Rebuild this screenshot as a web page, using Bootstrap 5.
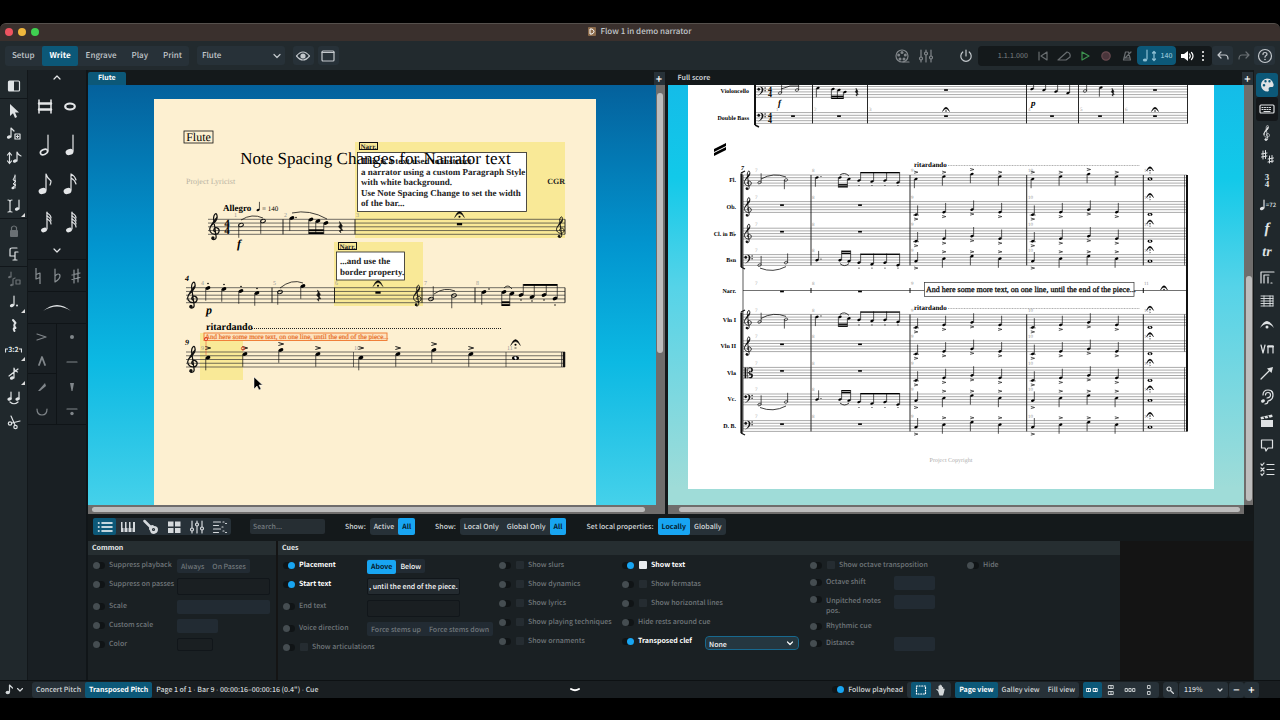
<!DOCTYPE html>
<html lang="en">
<head>
<meta charset="utf-8">
<meta name="viewport" content="width=device-width, initial-scale=1">
<title>Flow 1 in demo narrator</title>
<link href="https://cdn.jsdelivr.net/npm/bootstrap@5.3.0/dist/css/bootstrap.min.css" rel="stylesheet">
<style>
  :root { --teal:#0c5878; --azure:#18a5f2; --btn:#273138; --ink:#c3c8cc; }
  body { background:#000; color:var(--ink); font-family:"Noto Sans CJK SC",sans-serif; font-size:7px; line-height:16px; font-weight:500; text-rendering:geometricPrecision; }
  button, input, select { font:inherit; color:inherit; line-height:inherit; text-rendering:inherit; }
  button { background:none; border:0; padding:0; display:inline-flex; align-items:center; justify-content:center; white-space:nowrap; }
  svg { display:block; flex:none; }
  .ico { fill:none; stroke:currentColor; stroke-width:1.2; stroke-linecap:round; stroke-linejoin:round; }
  .ico:where(:not([width])) { width:16px; height:16px; }
  .ico .f, .f { fill:currentColor; stroke:none; }
  .app { min-height:100vh; padding:23px 0 22px; }
  .titlebar { height:18px; background:#3a302d; border-top:1px solid #55504c; border-radius:6px 6px 0 0; font-size:8px; padding-bottom:2px; }
  .lights { left:5px; top:4px; gap:5px; }
  .lights i { width:8px; height:8px; border-radius:50%; }
  .topbar { height:29px; background:#222a2e; font-size:8px; padding:0 5px; }
  .seg { background:var(--btn); border-radius:3px; }
  .seg button { border-radius:2px; }
  .on { background:var(--teal); color:#fff; }
  .hot { background:var(--azure); color:#06202f; font-weight:700; }
  .modes { gap:1px; }
  .modes button { height:20px; padding:0 7px; }
  .pick { appearance:none; border:0; outline:0; background:transparent; width:100%; height:100%; padding:0 5px; }
  .pickbox { background:var(--btn); border-radius:3px; }
  .pickbox svg { position:absolute; right:4px; top:calc(50% - 4px); width:8px; height:8px; pointer-events:none; }
  .sq { width:21px; height:19px; background:var(--btn); border-radius:3px; }
  .transport { width:234px; height:20px; padding-right:3px; background:#14191b; border-radius:4px; color:#686d70; }
  .transport button { width:21px; }
  .edge { background:#20282c; }
  .tools { width:28px; border-right:1px solid #12171a; padding-top:4px; }
  .tools button { width:27px; height:24px; position:relative; color:#dfe3e5; }
  .tools .rule { border-top:1px solid #11161a; }
  .tools .more::after { content:""; position:absolute; right:2px; bottom:1px; border:2px solid; border-color:transparent #ddd #ddd transparent; }
  .dimmed { color:#6a7074 !important; }
  .palette { width:60px; background:#191f23; border-right:2px solid #101518; color:#e4e6e8; }
  .palette section { border-bottom:1px solid #0f1417; }
  .notes { display:grid; grid-template-columns:1fr 1fr; padding:0 4px; }
  .notes button { height:39px; }
  .arts { display:grid; grid-template-columns:1fr 1fr; color:#80868a; }
  .arts button { height:25px; }
  .arts button:nth-child(odd) { border-right:1px solid #0f1417; }
  .arts .cut { border-bottom:1px solid #0f1417; }
  .right { width:27px; border-left:1px solid #141819; padding-top:3px; }
  .right button { width:26px; height:24px; color:#dfe2e4; }
  .right .on, .right .blk { width:22px; margin:0 2px; border-radius:3px; }
  .right .blk { background:#14171a; }
  .tabs { height:15px; background:#14191b; }
  .tabs .tab { height:13px; padding:0 10px; border-radius:2px 2px 0 0; font-weight:700; line-height:13px; }
  .tabs .plus { width:11px; height:13px; background:var(--btn); font-size:11px; }
  .panes { background:#14181a; gap:3px; }
  .paneA { flex:577 1 0; } .paneB { flex:586 1 0; }
  .canvas { min-height:0; overflow:hidden; }
  .skyA { background:linear-gradient(#04619c, #0295cf 38%, #0cb9e3 66%, #45d1ea); }
  .skyB { background:linear-gradient(#14bce8, #12c9e9 22%, #55d3e8 48%, #9fdcd8 96%); }
  .sheetA { margin:14px 0 0 66px; color:#111; } .sheetB { margin:0 0 0 20px; color:#111; }
  .vbar { width:9px; background:#6f6d6c; } .hbar { height:9px; background:#6f6d6c; }
  .thumb { background:#bdbdbd; border-radius:4px; }
  .propbar { height:27px; background:#14191b; color:#d5d9dc; padding:0 0 2px 5px; }
  .propbar .seg button { height:17px; padding:0 4px; }
  .propbar .modesel button { width:23px; }
  .search { width:75px; height:15px; margin-left:19px; background:#262e33; border:0; border-radius:2px; padding:0 3px; }
  .search::placeholder { color:#747b80; }
  .cap { margin:0 4px 0 20px; }
  .props { background:#141414; flex:1; gap:2px; }
  .box { background:#1a2023; }
  .boxhead { height:14px; background:#262e31; color:#e8eaeb; line-height:14px; padding:0 4px; font-weight:700; }
  .boxbody { padding:2px 5px 16px; color:#71777b; }
  .wA { width:188px; } .wB { width:842px; }
  .k1 { width:216px } .k2 { width:123px } .k3 { width:188px } .k4 { width:157px }
  .prop { display:flex; align-items:flex-start; position:relative; white-space:nowrap; }
  .prop > label { display:flex; align-items:center; gap:4px; flex:none; }
  .live > label { color:#fff; font-weight:700; }
  .r17 { min-height:17px } .r19 { min-height:19px } .r22 { min-height:22px } .r25 { min-height:25px }
  .sw { appearance:none; width:12px; height:7px; margin:0; border-radius:4px; background:#101416; position:relative; flex:none; }
  .sw::before { content:""; position:absolute; left:0; top:0; width:7px; height:7px; border-radius:50%; background:#454d51; }
  .sw:checked::before { left:auto; right:0; background:var(--azure); }
  .ck { appearance:none; width:8px; height:8px; margin:0 0 0 1px; background:#252c31; border-radius:1px; }
  .ck:checked { background:#e9ecef; }
  .ctl { flex:none; margin-top:2px; height:14px; border:0; border-radius:2px; background:#222b33; padding:0 3px; }
  .ctl.hollow { background:#1a1f22; border:1px solid #11161a; height:17px; }
  .ctl.group { padding:0; }
  .cA { width:84px; }
  .two { width:76px; line-height:10px; padding-top:3px; white-space:normal; }
  .w36 { width:36px } .w41 { width:41px } .w91 { width:93px }
  .ctl button { height:14px; padding:0 4px; border-radius:2px; }
  .statusbar { height:18px; background:#191e21; border-top:1px solid #0d1113; color:#d3d7d9; }
  .statusbar button { height:16px; }
  .statusbar .b { padding:0 4px; }
  .statusbar b.sep { font:400 7px "Liberation Sans",sans-serif; }
  .tiny { width:12px; height:12px; }
  .serif { font-family:"Liberation Serif",serif; font-weight:400; text-rendering:geometricPrecision; }
  .serif .sturdy { font-weight:700; fill:#222; }
</style>
</head>
<body>
<div class="app d-flex flex-column">
  <header class="titlebar position-relative d-flex align-items-center justify-content-center gap-1">
    <div class="lights position-absolute d-flex"><i style="background:#ee5460"></i><i style="background:#f0b73d"></i><i style="background:#3fd051"></i></div>
    <svg width="8" height="9"><rect width="8" height="9" rx="1" fill="#8b6a4a"/><path d="M2 2v5h2q2-1 2-2.500t-2-2.500z" fill="none" stroke="#fff"/></svg>
    <span>Flow 1 in demo narrator</span>
  </header>

  <nav class="topbar d-flex align-items-center">
    <div class="seg modes d-flex"><button>Setup</button><button class="on fw-bold">Write</button><button>Engrave</button><button>Play</button><button>Print</button></div>
    <div class="pickbox position-relative ms-2" style="width:88px;height:19px"><select class="pick" aria-label="Layout"><option>Flute</option></select><svg viewBox="0 0 8 8" class="ico"><path d="M1 2.500 4 5.500 7 2.500"/></svg></div>
    <button class="sq ms-2" aria-label="View"><svg class="ico" viewBox="0 0 16 16"><path d="M1.500 8Q8 0 14.500 8 8 16 1.500 8z"/><circle cx="8" cy="8" r="2.600" class="f"/></svg></button>
    <button class="sq ms-1" aria-label="Window"><svg class="ico" viewBox="0 0 16 16"><rect x="2" y="3" width="12" height="10" rx="1"/><path d="M2 4.500h12"/></svg></button>
    <div class="ms-auto d-flex align-items-center">
      <button class="me-2" style="color:#81868a" aria-label="Video"><svg class="ico" viewBox="0 0 16 16"><circle cx="8" cy="8" r="6"/><g class="f"><circle cx="8" cy="4.500" r="1.500"/><circle cx="4.700" cy="7" r="1.500"/><circle cx="11.300" cy="7" r="1.500"/><circle cx="6" cy="11" r="1.500"/><circle cx="10" cy="11" r="1.500"/></g><path d="M9 14h6"/></svg></button>
      <button class="me-4" style="color:#81868a" aria-label="Mixer"><svg class="ico" viewBox="0 0 16 16"><path d="M3 2v7M3 12v2M8 2v2M8 7v7M13 2v6M13 11v3"/><circle cx="3" cy="10.500" r="1.500"/><circle cx="8" cy="5.500" r="1.500"/><circle cx="13" cy="9.500" r="1.500"/></svg></button>
      <button class="me-1" aria-label="Power"><svg class="ico" viewBox="0 0 16 16" stroke-width="1.500"><path d="M4.800 4A5.200 5.200 0 1 0 11.200 4M8 2v6"/></svg></button>
      <div class="transport d-flex align-items-center justify-content-end">
        <span class="me-1" style="font-size:7px">1.1.1.000</span>
        <button aria-label="Rewind"><svg class="ico" viewBox="0 0 16 16"><path d="M4 4v8M12 4v8L6 8z"/></svg></button>
        <button aria-label="Slow"><svg class="ico" viewBox="0 0 16 16"><path d="M2 12 11 4q4 1 3 5l-4 3z"/></svg></button>
        <button style="color:#3e9350" aria-label="Play"><svg class="ico" viewBox="0 0 16 16"><path d="M5 4v8l7-4z"/></svg></button>
        <button aria-label="Record"><svg class="ico" viewBox="0 0 16 16"><circle cx="8" cy="8" r="4.200" fill="#4a353b" stroke="#67494f"/></svg></button>
        <button aria-label="Click"><svg class="ico" viewBox="0 0 16 16"><path d="M6.500 4h3l2 8h-7zM6 10l6-6M5.500 10h5"/></svg></button>
        <button class="on rounded-1" style="width:39px;height:19px;color:#8ec0d4;font-size:7px" aria-label="Tempo"><svg class="ico" viewBox="0 0 16 16"><path d="M6 2v9M13 4v8M11.500 5 13 3.500 14.500 5M11.500 11 13 12.500 14.500 11"/><ellipse cx="4" cy="12" rx="2.200" ry="1.600" class="f"/></svg><span class="ms-1">140</span></button>
        <button class="text-white" aria-label="Volume"><svg class="ico" viewBox="0 0 16 16"><path class="f" d="M2 6h3l4-3v10l-4-3H2z"/><path d="M10.500 6q1.500 2 0 4M12.500 4.500q3 3.500 0 7"/></svg></button>
        <button class="text-white" style="width:12px" aria-label="More"><svg width="4" height="12" class="f" viewBox="0 0 4 12"><circle cx="2" cy="2" r="1"/><circle cx="2" cy="6" r="1"/><circle cx="2" cy="10" r="1"/></svg></button>
      </div>
      <button class="sq" aria-label="Undo"><svg class="ico" viewBox="0 0 16 16"><path d="M6 4 3 7l3 3M3 7h7q3 0 3 4"/></svg></button>
      <button class="sq bg-transparent" style="color:#6a7074" aria-label="Redo"><svg class="ico" viewBox="0 0 16 16"><path d="m10 4 3 3-3 3M13 7H6q-3 0-3 4"/></svg></button>
      <button class="sq" aria-label="Help"><svg class="ico" viewBox="0 0 16 16"><circle cx="8" cy="8" r="6.500"/><path d="M6 6.500q0-2 2-2t2 1.700q0 1-1.200 1.600-.8.500-.8 1.400" /><circle cx="8" cy="11.500" r=".8" class="f"/></svg></button>
    </div>
  </nav>

  <div class="d-flex flex-grow-1">
    <aside class="tools edge d-flex flex-column" id="tools"></aside>
    <aside class="palette d-flex flex-column">
      <section>
        <button class="w-100" style="height:15px" aria-label="Shorter"><svg width="8" height="5" class="ico"><path d="M1 4 4 1 7 4"/></svg></button>
        <div class="notes" id="durations"></div>
        <button class="w-100" style="height:17px" aria-label="Longer"><svg width="8" height="5" class="ico"><path d="M1 1 4 4 7 1"/></svg></button>
      </section>
      <section class="d-flex justify-content-around align-items-center" style="height:32px;color:#8b9195">
        <button aria-label="Natural"><svg class="ico" viewBox="0 0 16 16"><path d="M6 0v11l4-1.500M10 16V5L6 6.500"/></svg></button>
        <button aria-label="Flat"><svg class="ico" viewBox="0 0 16 16"><path d="M6 1v13q5-3 5-6 0-2-2-2-1 0-3 2"/></svg></button>
        <button aria-label="Sharp"><svg class="ico" viewBox="0 0 16 16"><path d="M6 2v13M10 1v13M4 7l8-2M4 11.500l8-2"/></svg></button>
      </section>
      <section><button class="w-100" style="height:31px" aria-label="Slur"><svg width="30" height="8" class="f"><path d="M1 7Q15-5 29 7 15-2 1 7z"/></svg></button></section>
      <section class="arts" id="arts"></section>
    </aside>

    <main class="flex-grow-1 d-flex flex-column" style="min-width:0">
      <div class="panes d-flex">
        <section class="paneA d-flex flex-column" style="min-width:0">
          <div class="tabs d-flex align-items-end"><span class="tab on">Flute</span><button class="plus ms-auto text-white">+</button></div>
          <div class="d-flex">
            <div class="canvas skyA flex-grow-1"><svg class="sheetA serif" id="part" width="442" height="406" viewBox="154 99 442 406" style="background:#fdf0d1"></svg></div>
            <div class="vbar pt-2"><div class="thumb mx-auto" style="width:6px;height:63%"></div></div>
          </div>
          <div class="hbar d-flex align-items-center"><div class="thumb ms-1" style="width:96%;height:5px"></div></div>
        </section>
        <section class="paneB d-flex flex-column" style="min-width:0">
          <div class="tabs d-flex align-items-end"><span class="tab">Full score</span><button class="plus ms-auto text-white">+</button></div>
          <div class="d-flex">
            <div class="canvas skyB flex-grow-1" style="height:420px"><svg class="sheetB serif" id="full" width="526" height="404" viewBox="688 85 526 404" style="background:#fff"></svg></div>
            <div class="vbar d-flex flex-column justify-content-end pb-1"><div class="thumb mx-auto" style="width:6px;height:54%"></div></div>
          </div>
          <div class="hbar d-flex align-items-center justify-content-end pe-1" style="margin-right:9px"><div class="thumb" style="width:98%;height:5px"></div></div>
        </section>
      </div>

      <div class="propbar d-flex align-items-center">
        <div class="seg modesel d-flex" id="lower"></div>
        <input class="search" placeholder="Search..." aria-label="Search">
        <span class="cap">Show:</span><div class="seg d-flex"><button>Active</button><button class="hot">All</button></div>
        <span class="cap">Show:</span><div class="seg d-flex"><button>Local Only</button><button>Global Only</button><button class="hot">All</button></div>
        <span class="cap">Set local properties:</span><div class="seg d-flex"><button class="hot">Locally</button><button>Globally</button></div>
      </div>

      <div class="props d-flex">
        <section class="box wA">
          <div class="boxhead">Common</div>
          <div class="boxbody">
            <div class="prop r19"><label class="cA"><input type="checkbox" class="sw">Suppress playback</label><div class="ctl group"><button>Always</button><button>On Passes</button></div></div>
            <div class="prop r22"><label class="cA"><input type="checkbox" class="sw">Suppress on passes</label><input class="ctl hollow w91" aria-label="Passes"></div>
            <div class="prop r19"><label class="cA"><input type="checkbox" class="sw">Scale</label><input class="ctl w91" aria-label="Scale value"></div>
            <div class="prop r19"><label class="cA"><input type="checkbox" class="sw">Custom scale</label><input class="ctl w41" aria-label="Custom scale value"></div>
            <div class="prop r19"><label class="cA"><input type="checkbox" class="sw">Color</label><input class="ctl hollow w36" style="height:13px" aria-label="Color value"></div>
          </div>
        </section>
        <section class="box wB">
          <div class="boxhead">Cues</div>
          <div class="boxbody d-flex">
            <div class="k1">
              <div class="prop r19 live"><label class="cA"><input type="checkbox" class="sw" checked>Placement</label><div class="ctl group"><button class="hot">Above</button><button class="text-light">Below</button></div></div>
              <div class="prop r22 live"><label class="cA"><input type="checkbox" class="sw" checked>Start text</label><input class="ctl hollow text-light w91" style="background:#242b30;padding:0 1px" value=", until the end of the piece..." aria-label="Start text value"></div>
              <div class="prop r22"><label class="cA"><input type="checkbox" class="sw">End text</label><input class="ctl hollow w91" aria-label="End text value"></div>
              <div class="prop r19"><label class="cA"><input type="checkbox" class="sw">Voice direction</label><div class="ctl group"><button>Force stems up</button><button>Force stems down</button></div></div>
              <div class="prop r19"><label><input type="checkbox" class="sw"><input type="checkbox" class="ck" aria-label="Show articulations">Show articulations</label></div>
            </div>
            <div class="k2">
              <div class="prop r19"><label><input type="checkbox" class="sw"><input type="checkbox" class="ck">Show slurs</label></div>
              <div class="prop r19"><label><input type="checkbox" class="sw"><input type="checkbox" class="ck">Show dynamics</label></div>
              <div class="prop r19"><label><input type="checkbox" class="sw"><input type="checkbox" class="ck">Show lyrics</label></div>
              <div class="prop r19"><label><input type="checkbox" class="sw"><input type="checkbox" class="ck">Show playing techniques</label></div>
              <div class="prop r19"><label><input type="checkbox" class="sw"><input type="checkbox" class="ck">Show ornaments</label></div>
            </div>
            <div class="k3">
              <div class="prop r19 live"><label><input type="checkbox" class="sw" checked><input type="checkbox" class="ck" checked>Show text</label></div>
              <div class="prop r19"><label><input type="checkbox" class="sw"><input type="checkbox" class="ck">Show fermatas</label></div>
              <div class="prop r19"><label><input type="checkbox" class="sw"><input type="checkbox" class="ck">Show horizontal lines</label></div>
              <div class="prop r19"><label><input type="checkbox" class="sw">Hide rests around cue</label></div>
              <div class="prop r19 live"><label class="cA"><input type="checkbox" class="sw" checked>Transposed clef</label><div class="pickbox position-relative text-light" style="width:92px;height:12px;margin-top:4px;background:#253740;outline:1px solid #18698f"><select class="pick" style="padding:0 3px;line-height:10px" aria-label="Transposed clef value"><option>None</option></select><svg viewBox="0 0 8 8" class="ico"><path d="M1.500 3 4 5.500 6.500 3"/></svg></div></div>
            </div>
            <div class="k4">
              <div class="prop r17"><label><input type="checkbox" class="sw"><input type="checkbox" class="ck">Show octave transposition</label></div>
              <div class="prop r19"><label class="cA"><input type="checkbox" class="sw">Octave shift</label><input class="ctl w41" aria-label="Octaves"></div>
              <div class="prop r25"><label class="two align-items-start me-2"><input type="checkbox" class="sw">Unpitched notes pos.</label><input class="ctl w41" aria-label="Position"></div>
              <div class="prop r17"><label><input type="checkbox" class="sw">Rhythmic cue</label></div>
              <div class="prop r19"><label class="cA"><input type="checkbox" class="sw">Distance</label><input class="ctl w41" aria-label="Distance value"></div>
            </div>
            <div class="prop"><label><input type="checkbox" class="sw">Hide</label></div>
          </div>
        </section>
      </div>
    </main>
    <aside class="right edge d-flex flex-column" id="right"></aside>
  </div>

  <footer class="statusbar d-flex align-items-center justify-content-between">
    <div class="d-flex">
      <button style="width:28px" class="gap-1" aria-label="Input"><svg width="8" height="11" viewBox="0 0 8 11" class="ico"><path d="M4.500 8V1l3 3"/><ellipse cx="2.800" cy="8.500" rx="2.200" ry="1.800" class="f"/></svg><svg width="6" height="4" class="ico"><path d="M.5.500 3 3 5.500.5"/></svg></button>
      <div class="seg d-flex ms-1"><button class="b">Concert Pitch</button><button class="b on fw-bold">Transposed Pitch</button></div>
      <span class="ms-1">Page 1 of 1 <b class="sep">·</b> Bar 9 <b class="sep">·</b> 00:00:16–00:00:16 (0.4") <b class="sep">·</b> Cue</span>
    </div>
    <button class="text-white" aria-label="Toggle lower zone"><svg width="12" height="6" class="ico" style="stroke-width:2"><path d="M2 2q4 2.500 8 0"/></svg></button>
    <div class="d-flex" style="padding-right:21px">
      <label class="d-flex align-items-center gap-1"><input type="checkbox" class="sw" checked>Follow playhead</label>
      <div class="seg d-flex mx-1"><button class="on ms-1" style="width:20px" aria-label="Marquee"><svg class="tiny ico" viewBox="0 0 12 12"><rect x="1.500" y="2" width="9" height="8" stroke-dasharray="1 1.600"/></svg></button><button style="width:20px" aria-label="Hand"><svg class="tiny f" viewBox="0 0 12 12"><path d="M3 7 1 5.500 2 5l1.500 1V2q.7-.8 1.100 0V1q.7-.9 1.200 0v.500q.9-.6 1.200.3V3q1-.6 1.200.3V5q.8-.8 1.500 0L8.800 9 8 11.500H4.500z"/></svg></button></div>
      <div class="seg d-flex me-1"><button class="b on fw-bold">Page view</button><button class="b">Galley view</button><button class="b">Fill view</button></div>
      <div class="seg d-flex" id="arr"></div>
      <div class="d-flex ms-1">
        <button class="seg" style="width:15px" aria-label="Zoom"><svg class="ico" width="8" height="8" viewBox="0 0 8 8"><circle cx="3" cy="3" r="2"/><path d="m5 5 2.500 2.500"/></svg></button>
        <div class="pickbox position-relative" style="width:49px;height:16px;margin:0 1px"><select class="pick" aria-label="Zoom level"><option>119%</option></select><svg viewBox="0 0 8 8" class="ico"><path d="M2 3l2 2 2-2"/></svg></div>
        <button class="seg text-white" style="width:15px;font-size:11px">−</button><button class="seg text-white" style="width:15px;font-size:11px">+</button>
      </div>
    </div>
  </footer>
</div>

<script src="https://cdn.jsdelivr.net/npm/bootstrap@5.3.0/dist/js/bootstrap.bundle.min.js"></script>
<script>
/* ---------- engraving helpers: y values are page coordinates, s is one staff space ---------- */
const L = (x1,y1,x2,y2,w=.6,c='#111') => `<path d="M${x1} ${y1}L${x2} ${y2}" stroke="${c}" stroke-width="${w}" fill="none"/>`;
const T = (x,y,size,str,extra='') => `<text x="${x}" y="${y}" font-size="${size}" ${extra}>${str}</text>`;
const staff = (x1,x2,y,s) => [0,1,2,3,4].map(i => L(x1,y+i*s,x2,y+i*s,s>3?.7:.5,s>3?'#333':'#555')).join('');
const meter = (x,y,s,z) => T(x,y+s*2,z,`4<tspan x="${x}" dy="${s*2}">4</tspan>`,'font-weight="700" text-anchor="middle"');
const place = (x,y,k,body) => `<g transform="translate(${x} ${y}) scale(${k})">${body}</g>`;
const TREBLE = '<path d="M6 13.600C3.600 11 6 8.300 8.700 9.200 12.600 11 10.600 16.300 6.500 16 1.500 15.800-.5 11.500 1.500 8 3.500 4.500 9 2.300 8.700-2.500 8.600-4.500 8-6 7.300-6 5.300-5.500 4.600-2 5 .5L7.600 18.500C8 22 4 22.600 3 20.300" fill="none" stroke="currentColor" stroke-width="1.300"/><path d="M1.500 8C3.500 5 7.500 3 8.500-1L8.700-3 6.800-1 2.800 4.500Q.5 8 1 11z" fill="currentColor"/><circle cx="4.200" cy="20" r="1.800" fill="currentColor"/>';
const BASS = '<path d="M1 4.500C1-1 9.500-1.500 9.500 4.500 9.500 9 5 12 .5 14 5 11 7 8 7 4.500 7 .5 3.500-.5 2.200 2.500z" fill="currentColor"/><circle cx="2.600" cy="4.200" r="2" fill="currentColor"/><circle cx="12" cy="2.200" r="1.100" fill="currentColor"/><circle cx="12" cy="6.200" r="1.100" fill="currentColor"/>';
const ALTO = '<path d="M0 0h2.600v16H0zM3.600 0h1v16h-1zM4.600 8Q7 7 7 5q3 3 3-1.500Q10 1 7 1.500L6 3Q5-.3 8-.3q4.500.3 4.500 4T8 7.300L7 8l1 .7q4.500-.2 4.500 3.500t-4.500 4Q5 16.300 6 13l1 1.500q3 .5 3-2T7 11Q7 9 4.600 8z" fill="currentColor"/>';
const REST = '<path d="M2 0 5 4.500Q3 7 5.500 9.500q-3.500-.5-2 2.500Q0 9.500 4 9L1 5.500Q3.500 3.500 2 0z" fill="currentColor" stroke="currentColor" stroke-width=".6"/>';
const clef = (x,y,s,kind=TREBLE,m=1) => place(x,y+(m<1?2:0),s/4*m,kind);
const rest = (x,y,s) => place(x-s*.9,y+s*.6,s/4,REST);
const whole = (x,y,s) => `<rect x="${x-s*.7}" y="${y+s}" width="${s*1.4}" height="${s*.6}"/>`;
const slur = (x1,y1,x2,y2,h) => `<path d="M${x1} ${y1}Q${(x1+x2)/2} ${(y1+y2)/2-h} ${x2} ${y2}" fill="none" stroke="#111" stroke-width=".8"/>`;
const dot = (x,y,s) => `<circle cx="${x}" cy="${y}" r="${s*.2}"/>`;
const head = (x,y,s,open) => `<ellipse cx="${x}" cy="${y}" rx="${s*.66}" ry="${s*.44}" transform="rotate(-22 ${x} ${y})" ${open?`fill="none" stroke="#111" stroke-width="${s*.24}"`:''}/>`;
const note = (x,y,s,dir,open,len=3.4) => head(x,y,s,open)+L(x-dir*s*.6,y,x-dir*s*.6,y+dir*s*len,.7);
const accent = (x,y,s) => `<path d="M${x-s*.7} ${y-s*.4}L${x+s*.7} ${y}L${x-s*.7} ${y+s*.4}" fill="none" stroke="#111" stroke-width="${s*.25}"/>`;
const fermata = (x,y,s) => `<path d="M${x-s*1.3} ${y}Q${x} ${y-s*3.200} ${x+s*1.3} ${y}Q${x} ${y-s*2.100} ${x-s*1.3} ${y}z" stroke="#111" stroke-width=".5"/>`+dot(x,y-s*.2,s*1.4);
const semibreve = (x,y,s) => `<ellipse cx="${x}" cy="${y}" rx="${s*.95}" ry="${s*.55}"/><ellipse cx="${x}" cy="${y}" rx="${s*.3}" ry="${s*.42}" fill="#fff" transform="rotate(-25 ${x} ${y})"/>`;
const beam = (x1,x2,y,s) => `<rect x="${x1}" y="${y}" width="${x2-x1}" height="${s*.5}"/>`;
const num = (x,y,n,z=6) => T(x,y,z,n,'fill="#999"');
/* beamed run: notes [[x,y]...] sharing one beam line */
const run = (ns,s,dir,by,n=1) => ns.map(([x,y])=>head(x,y,s)+L(x-dir*s*.6,y,x-dir*s*.6,by,.7)).join('')
  + Array.from({length:n},(_,i)=>beam(ns[0][0]-dir*s*.6,ns[ns.length-1][0]-dir*s*.6,(dir>0?by-s*.5:by)-dir*i*s*.75,s)).join('');

/* ---------- flute part ---------- */
(() => {
  const s=3.75; let o='';
  const Y='#f9e997';
  o+=`<rect x="355" y="142" width="210" height="96" fill="${Y}"/><rect x="334" y="242" width="89" height="64" fill="${Y}"/><rect x="200" y="333" width="43" height="47" fill="${Y}"/>`;
  o+=`<rect x="184" y="131" width="29" height="12" fill="none" stroke="#111" stroke-width=".8"/>`+T(198.5,141,12,'Flute','text-anchor="middle"');
  o+=T(186,184,8,'Project Lyricist','fill="#b9b3a3"')+T(565,184,8,'CGR','text-anchor="end" class="sturdy"');
  o+=`<rect x="357.500" y="152.500" width="169" height="59" fill="#fff" stroke="#222" stroke-width=".8"/>`;
  ['This is a text used to instruct','a narrator using a custom Paragraph Style','with white background.','Use Note Spacing Change to set the width','of the bar...'].forEach((t,i)=>o+=T(361,164+i*10.5,9,t,'class="sturdy"'));
  o+=T(375.5,164,17,'Note Spacing Changes for Narrator text','text-anchor="middle"');
  o+=`<rect x="359.500" y="142.500" width="18" height="7" fill="${Y}" stroke="#111"/>`+T(368.5,148.5,7,'Narr.','text-anchor="middle" class="sturdy"');
  /* first system */
  let y=219.3;
  o+=staff(208,565,y,s)+clef(209,y,s)+meter(227,y,s,11);
  [283,355,565].forEach(x=>o+=L(x,y,x,y+15,.9));
  o+=T(223,211,9,'Allegro','font-weight="700"')+note(258,210,2.4,-1)+T(262,211,7,'= 140');
  o+=num(234,217,1)+num(284,217,2)+num(356,217,3);
  o+=note(241,225,s,1,1)+note(263,221,s,1,1)+slur(241,220,263,218,6)+note(292,218,s,1)+dot(296,217.5,s)+run([[311,219.5],[318,221],[326,223]],s,1,234,2)+slur(292,213,327,219,7)+rest(341,y,s);
  o+=fermata(459.500,217.500,s)+whole(459.500,y,s)+clef(556,y,s,TREBLE,.8)+T(237,248,12,'f','font-weight="700" font-style="italic"');
  /* second system */
  y=287.7;
  o+=staff(186,565,y,s)+clef(187,y,s); [272,334.5,422,475,565].forEach(x=>o+=L(x,y,x,y+15,.9));
  [[208,288],[224,289],[241,291],[257,293]].forEach(([a,b])=>o+=note(a,b,s,1)+dot(a,b-4.5,s*1.1));
  o+=T(185,281,8,'4','font-style="italic" font-weight="700"')+num(201,285,4)+num(273,285,5)+num(335,285,6)+num(424,285,7)+num(476,285,8);
  o+=note(280,292,s,1,1)+note(303,286,s,1)+slur(280,288,303,283,7)+rest(319,y,s)+fermata(378,286.500,s)+whole(378,y,s)+clef(413,y,s,TREBLE,.8);
  o+=note(431,299,s,-1,1)+note(454,295.5,s,1,1)+slur(434,294,455,291,6)+note(484,292,s,1)+dot(489,289,s)+run([[504,292],[512,293.5]],s,1,306,2)+slur(504,288,512,289,5);
  o+=run([[521,295],[532,297],[544,295],[555,298.5]],s,-1,284)+[[521,300],[532,301],[544,300],[555,305]].map(([a,b])=>dot(a,b,s)).join('');
  o+=T(206,314,12,'p','font-weight="700" font-style="italic"');
  o+=`<rect x="338.500" y="242.500" width="18" height="7" fill="${Y}" stroke="#111"/>`+T(347.5,248.5,7,'Narr.','text-anchor="middle" class="sturdy"');
  o+=`<rect x="336.500" y="252" width="68" height="28" fill="#fff" stroke="#222" stroke-width=".8"/>`+T(340,264,9,'...and use the','class="sturdy"')+T(340,274.5,9,'border property.','class="sturdy"');
  /* third system */
  y=352;
  o+=T(206,329.5,10,'ritardando','font-weight="700"')+`<path d="M252 328.500H502" stroke="#222" stroke-dasharray="1 1" fill="none"/>`;
  o+=`<rect x="204" y="333" width="183" height="7.500" fill="#fde2bd" stroke="#f0803a"/>`+T(205,339,7,'And here some more text, on one line, until the end of the piece...','fill="#e8702a" stroke="#e8702a" stroke-width=".2"');
  o+=staff(186,565,y,s)+clef(187,y,s)+L(353.500,y,353.500,y+15)+L(506,y,506,y+15)+L(561.500,y,561.500,y+15)+L(564,y,564,y+15,2.5);
  [208,245,281,318,361,398,434,471].forEach((x,i)=>{const d=[5.6,2,-2,2][i%4];o+=note(x,y+d,s,1)+accent(x,i%4==2?344:348,s)});
  o+=T(185,345,8,'9','font-style="italic" font-weight="700"')+num(201,350,9)+num(354,350,10)+num(507,350,11);
  o+=semibreve(515.5,358,s)+fermata(515.5,345.500,s)+accent(515.5,348,1.5);
  o+=`<g fill="none" stroke="#e0402a"><circle cx="206" cy="339" r="1.600"/><circle cx="243" cy="348.500" r="1.600"/><path d="M206 341v14" stroke-width=".5"/></g>`;
  o+=`<path d="M254 377v12l3-3 2 4 2-1-2-4h3.500z" stroke="#fff" stroke-width=".5"/>`;
  document.getElementById('part').innerHTML=o;
})();

/* ---------- full score ---------- */
(() => {
  const s=2.7, H=s*4; let o='';
  const name=(y,t)=>T(736,y+H/2+2,6,t,'text-anchor="end" font-weight="700"');
  const bars=(xs,a,b)=>xs.map(x=>L(x,a,x,b,.9)).join('');
  /* end of the first system */
  [86.500,112.600].forEach(y=>o+=staff(755,1188,y,s)+clef(757,y,s,BASS)+meter(770,y,s,8));
  o+=bars([812.5,867.5,1026.5,1078.5,1123.5,1187.5],85,123.400)+L(755,85,755,125,2)+L(755,125,759,127,1.5);
  o+=T(749,93,6,'Violoncello','text-anchor="end" font-weight="700"')+T(749,119.5,6,'Double Bass','text-anchor="end" font-weight="700"');
  o+=note(780,93,s,-1,1)+note(797,90,s,-1,1)+slur(781,89,799,86,3)+note(818,88,s,1)+run([[833,89],[839,90],[845,92]],s,1,99,2)+rest(857,86.500,s)+whole(946,86.5,s);
  o+=[[1032,89],[1044,90],[1056,91.5],[1068,93]].map(([a,b])=>note(a,b,s,-1)).join('')+note(1085,91,s,-1,1)+note(1101,87.5,s,1)+rest(1113,86.500,s)+whole(1155,86.500,s);
  o+=whole(793,112.6,s)+whole(839,112.6,s)+whole(946,112.6,s)+whole(1052,112.6,s)+whole(1100,112.6,s)+whole(1155,112.6,s)+fermata(946,111.500,s)+fermata(1155,111.500,s);
  [[776,1],[814,2],[869,3],[1028,4],[1080,5],[1125,6]].forEach(([x,n])=>o+=num(x,110.500,n,5));
  o+=T(778,106,9,'f','font-weight="700" font-style="italic"')+T(1031,106,9,'p','font-weight="700" font-style="italic"');
  o+=`<path d="M714 149 726 143v3l-12 6zM714 153 726 147v3l-12 6z"/>`;
  /* second system */
  const rows=[['Fl.',175,'t','mel'],['Ob.',201.6,'t'],['Cl. in B♭',228.2,'t'],['Bsn',254.6,'b','bas'],['Vln I',314.4,'t','mel'],['Vln II',340.8,'t'],['Vla',367.4,'a'],['Vc.',394,'b','bas'],['D. B.',420.6,'b']];
  rows.forEach(([n,y,c,m])=>{
    o+=name(y,n)+staff(743,1187,y,s)+(c=='a'?place(744.5,y,s/4,ALTO):clef(744,y,s,c=='t'?TREBLE:BASS));
    [[755,7],[812,8],[911,9],[1028,10],[1144,11]].forEach(([x,k])=>o+=num(x,y-2.600,k,5));
    if(!m) o+=whole(782,y,s)+whole(860,y,s);
    if(m=='mel') o+=note(759.5,y+7.5,s,-1,1)+note(786,y+5,s,1,1)+slur(761,y+4,786,y+2,6)+note(817,y+2.5,s,1)+dot(821,y+1.5,s)+run([[840,y+2.5],[849,y+4]],s,1,y+12.5,2)+slur(840,y,849,y+1,4)+run([[859,y+5.5],[872,y+6.5],[885,y+5.5],[898,y+7.5]],s,-1,y-3)+[859,872,885,898].map(x=>dot(x,y+10.500,s)).join('');
    if(m=='bas') o+=note(759.5,y+10.500,s,-1,1)+note(786,y+8,s,-1,1)+slur(760,y+13.500,786,y+12,-6)+note(817,y+5.5,s,-1)+dot(821,y+4.500,s)+run([[840,y+5.500],[849,y+6.500]],s,-1,y-4,2)+slur(840,y+9,849,y+9,-4)+run([[859,y+8],[872,y+9.500],[885,y+8],[898,y+10.500]],s,-1,y-1)+[859,872,885,898].map(x=>dot(x,y+13.500,s)).join('');
    const low=c=='a'||(c=='t'&&n!='Fl.');
    [916,944,972,1000,1032.700,1060.700,1088.700,1116.700].forEach((x,i)=>{
      const q=i%4;
      if(low){const d=[13,10.500,8,10.500][q]-(n[0]=='V'?3.500:0)*(n=='Vln I'?0:0);o+=note(x,y+d,s,-1)+accent(x,y+d+4.5,s)+(q==0?L(x-3,y+13.500,x+3,y+13.500):'')}
      else if(c=='b'){const d=[6.600,4,1.500,4][q];o+=q==0?note(x,y+d,s,-1)+accent(x,y+13.500,s):note(x,y+d,s,1)+accent(x,y-2.800,s)}
      else {const d=[4,1.500,-1,1.500][q];o+=note(x,y+d,s,1)+accent(x,q==2?y-5.500:y-2.800,s)}
    });
    o+=semibreve(1150,y+(low?13:c=='b'?6.600:4),s)+fermata(1150,y-4,s)+accent(1150,y-2,1.2);
  });
  const xs=[811,910,1026.700,1143.300];
  [[175,265.400],[314.400,351.600],[367.400,431.400]].forEach(([a,b])=>o+=bars(xs,a,b)+L(1184.500,a,1184.500,b));
  o+=bars(xs,351.600,367.400)+L(1187,175,1187,431.400,2)+L(743,175,743,431.400,.7)+L(741.500,173.500,741.500,267,2.200)+L(741.500,312.500,741.500,433,2.200);
  [[173,-2],[267,2],[312,-2],[433,2]].forEach(([y,d])=>o+=L(741,y,745,y+d,1.300));
  o+=T(736,293,6,'Narr.','text-anchor="end" font-weight="700"')+L(743,290.500,1187,290.500,.6)+[811,910,1143.300].map(x=>L(x,288,x,293,1)).join('');
  o+=whole(782,288,s)+whole(860,288,s)+fermata(1164,290,s)+[[755,7],[812,8],[911,9],[1144,11]].map(([x,k])=>num(x,285,k,5)).join('');
  o+=`<rect x="924.500" y="282.500" width="209.500" height="14" fill="#fff" stroke="#333" stroke-width=".7"/>`+T(926,292,8,'And here some more text, on one line, until the end of the piece...','stroke="#111" stroke-width=".3"');
  [166.500,309.500].forEach(y=>o+=T(914,y,7,'ritardando','font-weight="700"')+`<path d="M948 ${y-1}H1140" stroke="#777" stroke-width=".6" stroke-dasharray="1 .6" fill="none"/>`);
  o+=T(741,170,6,'7','font-style="italic" font-weight="700"')+T(951,462,6,'Project Copyright','text-anchor="middle" fill="#aaa"');
  document.getElementById('full').innerHTML=o;
})();

/* ---------- tool strips ---------- */
const svg = (body,box=16) => `<svg class="ico" viewBox="0 0 ${box} ${box}">${body}</svg>`;
const e = (x,y,r=2.200) => `<ellipse class="f" cx="${x}" cy="${y}" rx="${r}" ry="${r*.75}" transform="rotate(-20 ${x} ${y})"/>`;
const tools=[
 ['Panels','<rect x="2.500" y="3" width="11" height="10" rx="1"/><path class="f" d="M3 3h5v10H3z"/>'],
 ['Select','<path class="f" d="M4 1v12l3-2.800 2 4.800 2-1-2-4.500h4z"/>','rule'],
 ['Note input','<path d="M5 11V2l3 3"/>'+e(3,11)+'<rect x="9" y="8" width="5" height="5"/><path d="M11.500 9.500v2M10.500 10.500h2"/>'],
 ['Pitch','<path d="M3.500 3v10M1.500 5l2-2.500 2 2.500M1.500 11l2 2.500 2-2.500M11 11V2q1 3 4 4"/>'+e(9,11)],
 ['Grace','<path d="M9 1v13M9 2 7 6l3 1-3 3 3 1-3 2" stroke-width="1"/>'+e(7,14,1.600)],
 ['Insert','<path d="M2 2q2 0 2 2v9q0 1-2 1M6 2Q4 2 4 4v9q0 1 2 1M13 2v9"/>'+e(11,11),'more'],
 ['Lock','<rect class="f" x="4" y="7" width="8" height="7" rx="1"/><path d="M5.500 7V4.500q2.500-3 5 0V7"/>','rule dimmed'],
 ['Chord','<path d="M11 2H6q-2 0-2 2v6h5V6h3M9 6v8M7 14h4"/>'],
 ['Voice','<path d="M5 6V1M7 14V8l2-1"/>'+e(3.500,6,1.500)+e(5.500,14,1.500)+'<rect x="10" y="9" width="4" height="4"/>','rule dimmed'],
 ['Dot','<path d="M8 2v9"/>'+e(6,11.500)+'<circle class="f" cx="11" cy="11.500" r="1"/>','more'],
 ['Rest','<path d="M7 2l2.500 3Q7 7 9.500 10q-3-.5-1 3" stroke-width="2"/>'],
 ['Tuplet','3:2','more'],
 ['Grace note','<path d="M8 12V2q.5 3 3.500 4M3 10l9-7"/>'+e(6,12),'more'],
 ['Tie','<path d="M5 9V2M13 9V2M4 12q4 3.500 8 0"/>'+e(3.500,9)+e(11.500,9)],
 ['Scissors','<path d="M5 2l4 9M14 7 6 9"/><circle cx="4" cy="9.500" r="1.700"/><circle cx="9.500" cy="13" r="1.700"/>']];
document.getElementById('tools').innerHTML=tools.map(([n,b,c=''])=>`<button class="${c}" aria-label="${n}">${b==='3:2'?'<svg width="3" height="5" class="ico"><path d="M.5 4V1H3"/></svg><span class="fw-bold">3:2</span><svg width="3" height="5" class="ico"><path d="M0 1h2.500v3"/></svg>':svg(b)}</button>`).join('');

const big = b => `<svg width="18" height="24" viewBox="0 0 18 24" class="ico">${b}</svg>`;
const flags = n => Array.from({length:n},(_,i)=>`<path d="M11 ${2+i*3}q4 2 4 5"/>`).join('');
document.getElementById('durations').innerHTML=[
 ['Breve','<path d="M3 6v13M15 6v13" stroke-width="1.500"/><path d="M3 9.500h12M3 15.500h12" stroke-width="2.500"/>'],
 ['Whole','<ellipse cx="9" cy="12.500" rx="4.800" ry="3" stroke-width="2.200"/>'],
 ['Half','<path d="M12 2v16"/><ellipse cx="8" cy="19" rx="3.800" ry="2.400" transform="rotate(-25 8 19)" stroke-width="1.600"/>'],
 ['Quarter','<path d="M12 2v16"/>'+e(8.500,19,4)],
 ['Eighth','<path d="M10 2v16M10 2q1 4 5 7 0 2-1 4"/>'+e(6.500,19,4)],
 ['16th','<path d="M10 2v16M10 2q4 2 5 6M10 6q4 2 5 6"/>'+e(6.500,19,4)],
 ['32nd','<path d="M11 1v17"/>'+flags(3)+e(8,19,3)],
 ['64th','<path d="M11 1v17"/>'+flags(4)+e(8,19,3)]].map(([n,b])=>`<button aria-label="${n}">${big(b)}</button>`).join('');
document.getElementById('arts').innerHTML=[
 ['Accent','<path d="M3 5l9 3-9 3"/>'],['Staccato','<circle class="f" cx="8" cy="8" r="2"/>'],
 ['Marcato','<path d="M5 12 8 4l3 8" stroke-width="1.800"/>','cut'],['Tenuto','<path d="M3 8h10"/>'],
 ['Stress','<path class="f" d="M4 12 11 4l1 3-6 5z"/>'],['Staccatissimo','<path class="f" d="M6 4h4l-1.500 8h-1z"/>'],
 ['Unstress','<path d="M3 5q0 6 5 6t5-6"/>'],['Portato','<path d="M3 5h10"/><circle class="f" cx="8" cy="9.500" r="1.700"/>']].map(([n,b,c=''])=>`<button class="${c}" aria-label="${n}">${svg(b)}</button>`).join('');

const gl = (t,z=15) => `<span style="font:italic 700 ${z}px 'Liberation Serif',serif">${t}</span>`;
document.getElementById('right').innerHTML=[
 ['Panels','<path class="f" fill-rule="evenodd" d="M8 1.500a6.500 6.500 0 1 0 1 13q1.500-.5.500-2.500 0-2 2-2h2q1.500-1 1-3Q13 1.500 8 1.500zM5 9.500a1.300 1.300 0 1 1 0-2.600 1.300 1.300 0 0 1 0 2.600zM6.500 5.500a1.200 1.200 0 1 1 0-2.400 1.200 1.200 0 0 1 0 2.400zM10.500 5.500a1.200 1.200 0 1 1 0-2.400 1.200 1.200 0 0 1 0 2.400z"/>','on'],
 ['Keyboard','<rect x="1" y="4" width="14" height="8" rx="1"/><path d="M3 6.500h10M3 8.500h10" stroke-dasharray="1 1.500"/><path d="M5 10.500h6"/>','blk'],
 ['Clefs','<g transform="translate(4.500 3.500) scale(.55)">'+TREBLE+'</g>'],
 ['Key signatures','<path d="M4 2v8M6.500 1.500v8M2.500 5l5.500-1M2.500 8 8 7M10.500 7v7M13 6.500v7M9 10l5.500-1M9 13l5.500-1" stroke-width="1"/>'],
 ['Time signatures','34'],
 ['Tempo','72'],
 ['Dynamics',gl('f')],['Ornaments',gl('tr',14)],
 ['Repeats','<path d="M2 14V3h13M5 14V6h5M9 8v6M12 14h1"/>'],
 ['Bars','<path d="M2 3h12M2 5.500h12M2 8h12M2 10.500h12M2 13h12M5 3v10M11 3v10M14 3v10" stroke-width=".9"/>'],
 ['Holds','<path class="f" d="M1 11Q8-3 15 11 8 3 1 11z"/><circle class="f" cx="8" cy="10" r="1.500"/>'],
 ['Playing techniques','<path d="M2 4l2 8 2-8M9 12V5h5v7"/><path d="M9 5.500h5" stroke-width="2"/>'],
 ['Lines','<path d="M2 14 11 5"/><path class="f" d="M14 2 12.500 8 8 3.500z"/>'],
 ['Cues','<path d="M4 6q0-5 5-5t5 5-5 6q0 3-3 3M6.500 6q0-2.500 2.500-2.500T11.500 6 8 9"/>'+e(4,12,2)],
 ['Video','<path class="f" d="M2 7h12v7H2zM1.500 4 13 1.500l.7 2.500L2 6.500z"/><path d="M5 4l1 2M9 3l1 2" stroke="#20282c"/>'],
 ['Comments','<path d="M2.500 3h11v8H9l-2 3-1-3H2.500z"/>'],
 ['Review','<path d="M2 3l1 1.500L5 2M2 7l3 3M5 7l-3 3M2 13l1 1.500L5 12M8 3.500h7M8 8.500h7M8 13.500h7"/>']].map(([n,b,c=''])=>{
  if(b==='34') b='<span style="font:700 9px/7px \'Liberation Serif\',serif">3<br>4</span>';
  else if(b==='72') b='<svg width="8" height="12" viewBox="0 0 8 12" class="ico"><path d="M6 1v8"/>'+e(4,9.500)+'</svg><span style="font-size:6px">=72</span>';
  else if(b[1]!=='s') b=svg(b);
  return `<button class="${c}" aria-label="${n}">${b}</button>`}).join('');

document.getElementById('lower').innerHTML=[
 ['Properties','<path d="M5 4h10M5 8h10M5 12h10" stroke-width="1.600"/><path d="M1.500 4h.5M1.500 8h.5M1.500 12h.5" stroke-width="1.600"/>','on'],
 ['Keyboard','<path class="f" d="M1 3h1.500v6h1v4H1zM5 3h1.500v6h1v4H4.500V9H5zM9 3h1.500v6h1v4h-3V9H9zM13 3h2v10h-2.500V9h.5z"/>'],
 ['Fretboard','<path d="M1.500 2 8 8.500" stroke-width="2.500"/><path class="f" d="M7 7q3-2 4 0 4 0 4 3.500T11 15q-3.500 0-4-3.500Q5 10 7 7z"/><circle cx="10.500" cy="10.500" r="1" stroke="#273138"/>'],
 ['Pads','<path class="f" d="M2 2.500h5.500v5H2zM9 2.500h5.500v5H9zM2 9h5.500v5H2zM9 9h5.500v5H9z"/>'],
 ['Mixer','<path d="M3 2v7M3 12v2M8 2v2M8 7v7M13 2v6M13 11v3"/><circle cx="3" cy="10.500" r="1.500"/><circle cx="8" cy="5.500" r="1.500"/><circle cx="13" cy="9.500" r="1.500"/>'],
 ['Key editor','<path d="M1.500 3h7M1.500 6.500h5M1.500 10h7M1.500 13.500h5M11 3h1M13.500 4.500h1M10 8h1M11 12h1M13.500 13.500h1"/>']].map(([n,b,c=''])=>`<button class="${c}" style="padding:0" aria-label="${n}">${svg(b)}</button>`).join('');

document.getElementById('arr').innerHTML=[
 ['Spreads horizontal','<path d="M1 6h5v4H1zM3.500 6v4M10 6h5v4h-5zM12.500 6v4"/>','on'],
 ['Spreads vertical','<path d="M5 2h6v4H5zM8 2v4M5 10h6v4H5zM8 10v4"/>'],
 ['Singles horizontal','<path d="M2 6h2.500v4H2zM7 6h2.500v4H7zM12 6h2.500v4H12z"/>'],
 ['Singles vertical','<path d="M6.500 2h3v4h-3zM6.500 10h3v4h-3z"/>']].map(([n,b,c=''])=>`<button class="${c}" style="width:19px" aria-label="${n}">${svg(b).replace('class="ico"','class="ico tiny"')}</button>`).join('');
</script>
</body>
</html>
